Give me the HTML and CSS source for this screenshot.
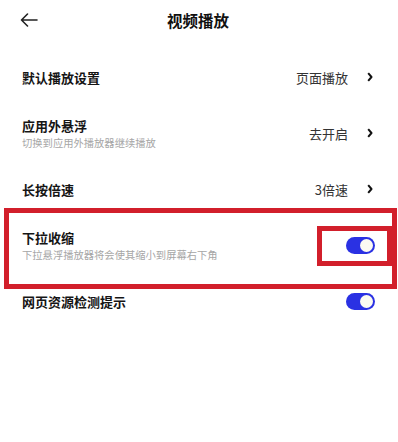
FILE: index.html
```html
<!DOCTYPE html>
<html lang="zh-CN">
<head>
<meta charset="utf-8">
<title>视频播放</title>
<link rel="stylesheet" href="styles.css">
</head>
<body>
<div class="page">
  <header class="topbar">
    <svg class="back" width="18" height="14" viewBox="0 0 18 14"><path d="M17 7H1.5M7.5 1L1.5 7l6 6" fill="none" stroke="#222" stroke-width="1.6" stroke-linecap="round" stroke-linejoin="round"/></svg>
    <h1 class="title">视频播放</h1>
  </header>
  <ul class="list">
    <li class="row">
      <div class="text"><div class="name">默认播放设置</div></div>
      <div class="value">页面播放</div>
      <svg class="chev" width="6" height="10" viewBox="0 0 6 10"><path d="M1.2 1.2L4.5 5 1.2 8.8" fill="none" stroke="#111" stroke-width="2" stroke-linejoin="round"/></svg>
    </li>
    <li class="row">
      <div class="text"><div class="name">应用外悬浮</div><div class="desc">切换到应用外播放器继续播放</div></div>
      <div class="value">去开启</div>
      <svg class="chev" width="6" height="10" viewBox="0 0 6 10"><path d="M1.2 1.2L4.5 5 1.2 8.8" fill="none" stroke="#111" stroke-width="2" stroke-linejoin="round"/></svg>
    </li>
    <li class="row">
      <div class="text"><div class="name">长按倍速</div></div>
      <div class="value">3倍速</div>
      <svg class="chev" width="6" height="10" viewBox="0 0 6 10"><path d="M1.2 1.2L4.5 5 1.2 8.8" fill="none" stroke="#111" stroke-width="2" stroke-linejoin="round"/></svg>
    </li>
    <li class="row">
      <div class="text"><div class="name">下拉收缩</div><div class="desc">下拉悬浮播放器将会使其缩小到屏幕右下角</div></div>
      <span class="toggle"><span class="knob"></span></span>
    </li>
    <li class="row">
      <div class="text"><div class="name">网页资源检测提示</div></div>
      <span class="toggle"><span class="knob"></span></span>
    </li>
  </ul>
  <div class="mark mark-row"></div>
  <div class="mark mark-toggle"></div>
</div>
</body>
</html>
```

FILE: styles.css
```css
* { box-sizing: border-box; }
html, body { margin: 0; padding: 0; background: #fff; }
body {
  font-family: "Noto Sans CJK SC", "Noto Sans", sans-serif;
  color: #1a1a1a;
  width: 398px;
  height: 442px;
  overflow: hidden;
}
.page { position: relative; width: 398px; height: 442px; }
.topbar {
  height: 40px;
  display: flex;
  align-items: center;
  justify-content: center;
  position: relative;
}
.back { position: absolute; left: 20px; top: 13px; }
.title {
  margin: 0;
  font-size: 15.5px;
  font-weight: 700;
  line-height: 20px;
  margin-left: -2px;
  margin-top: 0px;
  color: #111;
}
.list { list-style: none; margin: 0; padding: 9px 0 0 0; }
.row {
  height: 56px;
  display: flex;
  align-items: center;
  padding: 0 22px 0 22px;
}
.text { flex: 1; display: flex; flex-direction: column; }
.name { font-size: 13px; font-weight: 700; line-height: 17px; color: #151515; }
.desc { font-size: 10.3px; line-height: 14px; color: #a6a6a6; margin-top: 2px; }
.value { font-size: 13px; color: #333; line-height: 17px; margin-right: 19px; }
.chev { display: block; margin-right: 3px; }
.toggle {
  width: 29px;
  height: 17px;
  border-radius: 9px;
  background: #2a31e3;
  position: relative;
  margin-right: 1px;
}
.knob {
  position: absolute;
  right: 2px;
  top: 2px;
  width: 13px;
  height: 13px;
  border-radius: 50%;
  background: #fbfaf2;
}
.mark { position: absolute; border: 5px solid #d21f2b; }
.mark-row { left: 4px; top: 208px; width: 393px; height: 81px; }
.mark-toggle { left: 317px; top: 226px; width: 75px; height: 40px; }
```
